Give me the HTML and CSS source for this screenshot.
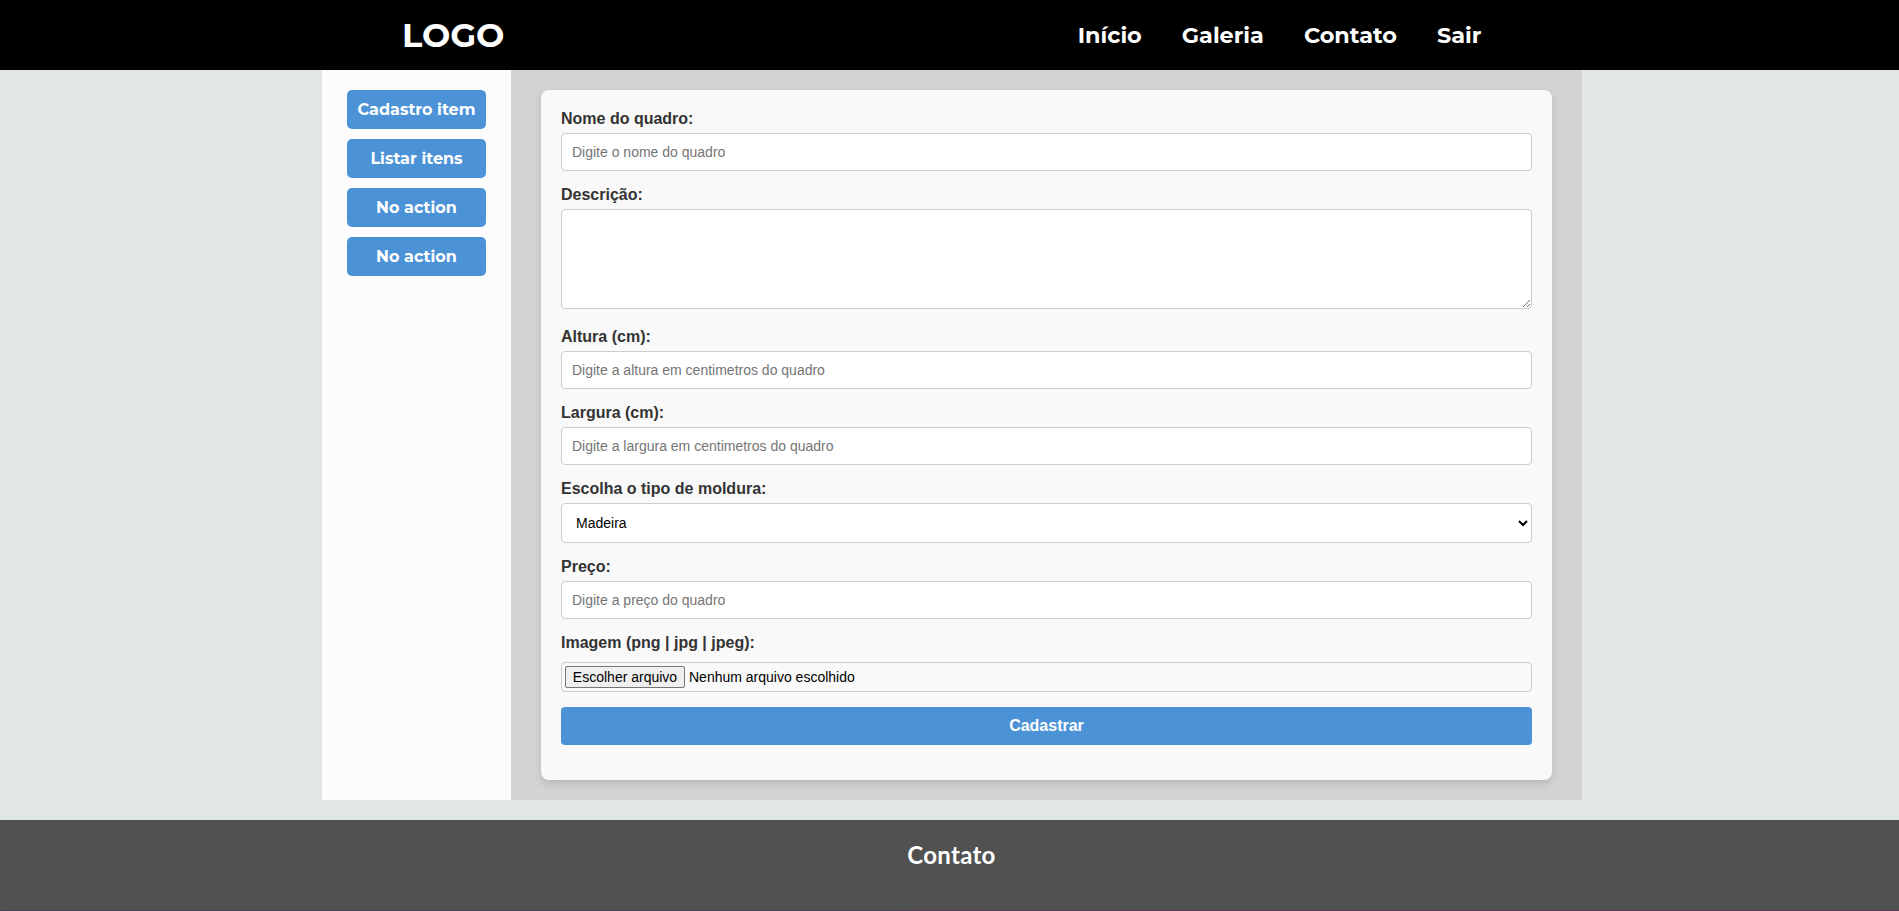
FILE: index.html
```html
<!DOCTYPE html>
<html lang="pt-BR">
<head>
<meta charset="utf-8">
<title>Cadastro de quadros</title>
<link rel="stylesheet" href="styles.css">
</head>
<body>
<header class="header">
  <div class="logo">LOGO</div>
  <nav class="nav">
    <a>Início</a>
    <a>Galeria</a>
    <a>Contato</a>
    <a>Sair</a>
  </nav>
</header>
<main class="main">
  <aside class="sidebar">
    <a class="side-button">Cadastro item</a>
    <a class="side-button">Listar itens</a>
    <a class="side-button">No action</a>
    <a class="side-button">No action</a>
  </aside>
  <section class="content">
    <form class="card">
      <label class="label" for="nome">Nome do quadro:</label>
      <input class="field" id="nome" type="text" placeholder="Digite o nome do quadro">
      <label class="label" for="descricao">Descrição:</label>
      <textarea class="field area" id="descricao"></textarea>
      <label class="label" for="altura">Altura (cm):</label>
      <input class="field" id="altura" type="text" placeholder="Digite a altura em centimetros do quadro">
      <label class="label" for="largura">Largura (cm):</label>
      <input class="field" id="largura" type="text" placeholder="Digite a largura em centimetros do quadro">
      <label class="label" for="moldura">Escolha o tipo de moldura:</label>
      <select class="field select" id="moldura"><option>Madeira</option></select>
      <label class="label" for="preco">Preço:</label>
      <input class="field" id="preco" type="text" placeholder="Digite a preço do quadro">
      <div class="label">Imagem (png | jpg | jpeg):</div>
      <div class="file"><span class="file-button">Escolher arquivo</span><span>Nenhum arquivo escolhido</span></div>
      <button class="submit" type="button">Cadastrar</button>
    </form>
  </section>
</main>
<footer class="footer"><h2 class="footer-title">Contato</h2></footer>
</body>
</html>
```
FILE: styles.css
```css
* { box-sizing: border-box; }
body {
  margin: 0;
  height: 911px;
  overflow: hidden;
  background: #e1e6e6;
  font-family: "Liberation Sans", Arial, sans-serif;
  font-size: 16px;
}
.header {
  height: 70px;
  padding: 0 417.5px 0 402px;
  display: flex;
  align-items: center;
  justify-content: space-between;
  background: #000;
  color: #fff;
  font-family: Montserrat, Inter, sans-serif;
  font-weight: 700;
}
.logo { margin-bottom: 2px; font-size: 33.6px; }
.nav { display: flex; gap: 40px; font-size: 22.4px; }
.main {
  width: 1260px;
  height: 730px;
  margin: 0 0 20px 322px;
  display: flex;
}
.sidebar {
  width: 189px;
  padding: 20px 25px;
  display: flex;
  flex-direction: column;
  gap: 10px;
  background: #fcfcfc;
}
.side-button {
  height: 39px;
  display: flex;
  align-items: center;
  justify-content: center;
  white-space: nowrap;
  border-radius: 5px;
  background: #4b92d7;
  color: #fff;
  font: 700 16px Montserrat, Inter, sans-serif;
}
.content { flex: 1; padding: 20px 30px; background: #d3d3d3; }
.card {
  height: 690px;
  padding: 20px;
  border-radius: 8px;
  background: #f9f9f9;
  box-shadow: 0 4px 8px rgba(0, 0, 0, 0.12);
}
.label {
  display: block;
  height: 18px;
  margin-bottom: 5px;
  line-height: 18px;
  font-weight: 700;
  color: #333;
}
.field {
  display: block;
  width: 100%;
  height: 38px;
  margin: 0 0 15px;
  padding: 10px;
  border: 1px solid #ccc;
  border-radius: 4px;
  background: #fff;
  color: #000;
  font: 14px "Liberation Sans", Arial, sans-serif;
}
.field::placeholder { color: #757575; }
.area { height: 100px; margin-bottom: 19px; resize: vertical; }
.select { height: 40px; }
.file {
  height: 30px;
  margin: 10px 0 15px;
  padding: 3px;
  display: flex;
  align-items: center;
  gap: 4px;
  border: 1px solid #ccc;
  border-radius: 4px;
  font-size: 14px;
}
.file-button {
  width: 120px;
  height: 22px;
  line-height: 20px;
  text-align: center;
  border: 1px solid #767676;
  border-radius: 2px;
  background: #efefef;
}
.submit {
  display: block;
  width: 100%;
  height: 38px;
  padding: 0;
  border: 0;
  border-radius: 4px;
  background: #4b92d7;
  color: #fff;
  font: 700 16px "Liberation Sans", Arial, sans-serif;
}
.footer {
  height: 91px;
  padding: 20px 0 0 4px;
  background:
    linear-gradient(90deg, #404352, #41465c 35%, #5a3a5c 60%, #5a3a5c) bottom / 100% 1px no-repeat,
    #515151;
  color: #fff;
  text-align: center;
}
.footer-title { margin: 0; font: 700 24px/29px Lato, sans-serif; letter-spacing: 0.3px; }
```
